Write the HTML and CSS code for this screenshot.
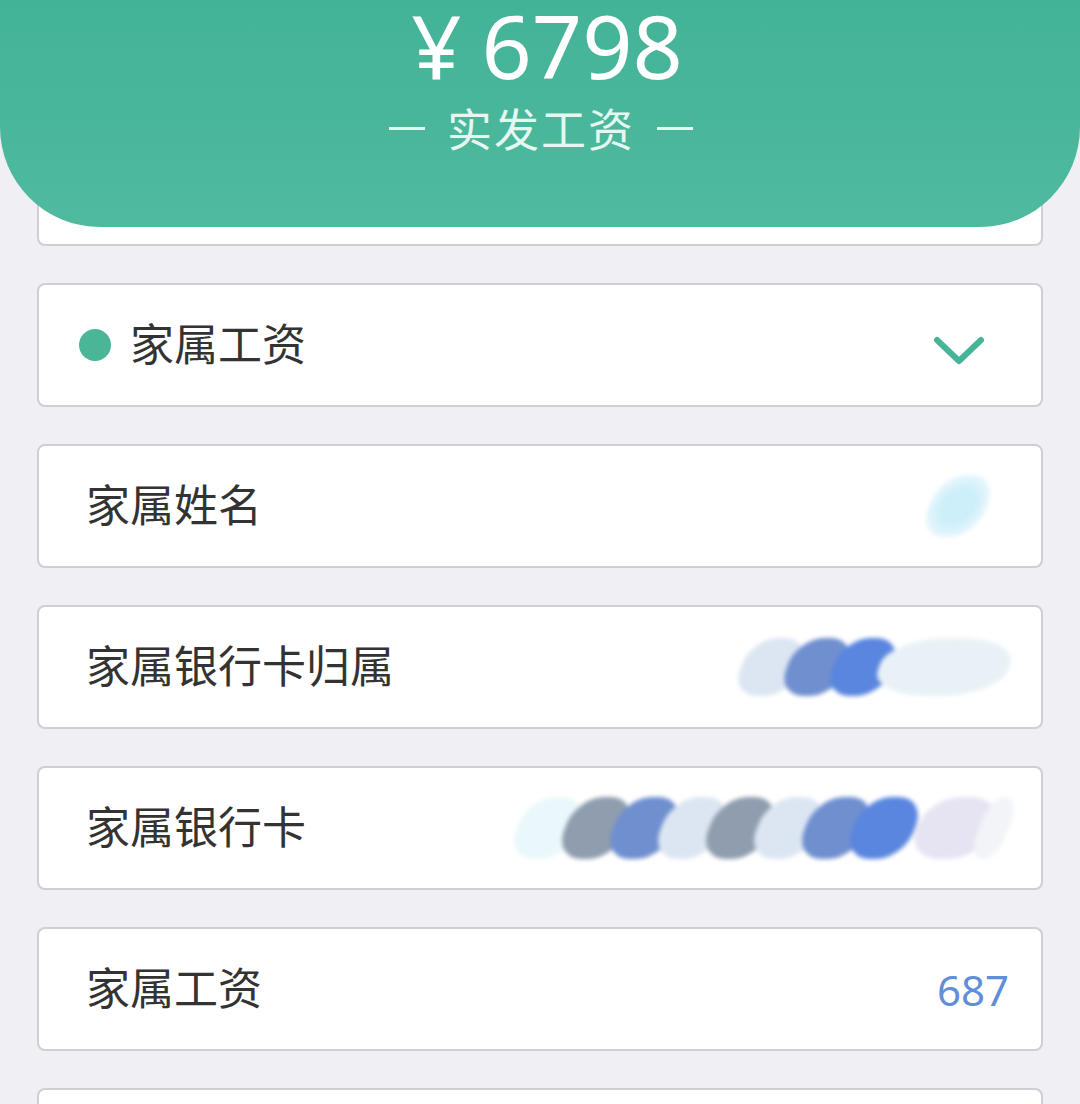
FILE: index.html
```html
<!DOCTYPE html>
<html lang="zh-CN">
<head>
    <meta charset="UTF-8">
    <meta name="viewport" content="width=device-width, initial-scale=1.0">
    <title>实发工资</title>
    <link rel="stylesheet" href="styles.css">
</head>
<body>
    <header class="summary">
        <div class="amount"><span class="currency">¥</span>6798</div>
        <div class="caption"><span class="dash"></span>实发工资<span class="dash"></span></div>
    </header>

    <main class="rows">
        <div class="row"></div>

        <div class="row row-group">
            <span class="dot"></span>
            <span class="label">家属工资</span>
            <svg class="chevron" width="60" height="40" viewBox="0 0 60 40">
                <polyline points="8,10 30,31 52,10" fill="none" stroke="#47B497" stroke-width="6" stroke-linecap="round" stroke-linejoin="round"/>
            </svg>
        </div>

        <div class="row">
            <span class="label">家属姓名</span>
            <span class="smudge smudge-name">
                <i class="blob b-cyan"></i>
            </span>
        </div>

        <div class="row">
            <span class="label">家属银行卡归属</span>
            <span class="smudge smudge-bank">
                <i class="blob b-pale"></i>
                <i class="blob b-blue"></i>
                <i class="blob b-bright"></i>
                <i class="blob b-pale wide"></i>
            </span>
        </div>

        <div class="row">
            <span class="label">家属银行卡</span>
            <span class="smudge smudge-card">
                <i class="blob b-mist"></i>
                <i class="blob b-grey"></i>
                <i class="blob b-blue"></i>
                <i class="blob b-pale"></i>
                <i class="blob b-grey"></i>
                <i class="blob b-pale"></i>
                <i class="blob b-blue"></i>
                <i class="blob b-bright"></i>
                <i class="blob b-gap"></i>
                <i class="blob b-lilac"></i>
                <i class="blob b-mist small"></i>
            </span>
        </div>

        <div class="row">
            <span class="label">家属工资</span>
            <span class="value">687</span>
        </div>

        <div class="row"></div>
    </main>
</body>
</html>
```

FILE: styles.css
```css
body {
    margin: 0;
    background-color: #EFEFF4;
    font-family: "Noto Sans CJK SC", "Noto Sans", sans-serif;
    color: #333333;
    overflow: hidden;
}
.summary {
    position: relative;
    z-index: 2;
    height: 227px;
    box-sizing: border-box;
    padding-top: 0;
    background: linear-gradient(180deg, #43B398 0%, #4AB79B 60%, #50BA9E 100%);
    border-radius: 0 0 100px 100px;
    color: #FFFFFF;
    text-align: center;
}
.amount {
    font-family: "Noto Sans", sans-serif;
    font-size: 88px;
    line-height: 90px;
    padding-left: 14px;
}
.currency {
    margin-right: 20px;
}
.caption {
    display: flex;
    justify-content: center;
    align-items: center;
    gap: 22px;
    font-size: 45px;
    line-height: 56px;
    margin-top: 10px;
    color: #E4F7F0;
    letter-spacing: 2px;
    padding-left: 2px;
}
.dash {
    width: 36px;
    height: 3px;
    background-color: #E4F7F0;
}
.rows {
    display: flex;
    flex-direction: column;
    gap: 37px;
    margin: -105px 37px 0;
}
.row {
    height: 124px;
    box-sizing: border-box;
    background-color: #FFFFFF;
    border: 2px solid #CFCFD3;
    border-radius: 8px;
    display: flex;
    align-items: center;
    padding: 0 32px 0 47px;
    flex-shrink: 0;
}
.row-group {
    padding-left: 40px;
}
.dot {
    width: 32px;
    height: 32px;
    border-radius: 50%;
    background-color: #4BB598;
    margin-right: 19px;
}
.label {
    font-size: 44px;
    line-height: 1;
    color: #333333;
    margin-top: -6px;
}
.chevron {
    margin-left: auto;
    margin-right: 20px;
    margin-top: 10px;
}
.value {
    margin-left: auto;
    font-family: "Noto Sans", sans-serif;
    font-size: 42px;
    color: #5F8FDA;
}
.smudge {
    margin-left: auto;
    display: flex;
    align-items: center;
    filter: blur(2px);
}
.blob {
    display: block;
    height: 60px;
    width: 60px;
    border-radius: 45%;
    margin-left: -14px;
    transform: skewX(-20deg);
}
.smudge-name {
    margin-right: 22px;
}
.smudge-name .b-cyan {
    width: 58px;
    height: 62px;
    background: radial-gradient(ellipse at center, #CDEFFA 40%, #E6F6FC 70%, rgba(255,255,255,0) 100%);
}
.smudge-bank .blob {
    height: 58px;
}
.b-pale {
    background-color: #DCE6F2;
}
.b-pale.wide {
    width: 130px;
    background-color: #E8F2F6;
}
.b-blue {
    background-color: #6F8FCF;
}
.b-bright {
    background-color: #5A86E0;
}
.b-grey {
    background-color: #8F9DAE;
}
.b-mist {
    background-color: #EAF8FB;
}
.b-mist.small {
    width: 30px;
    background-color: #F2F4F8;
}
.b-lilac {
    width: 80px;
    background-color: #E6E4F2;
}
.b-gap {
    width: 30px;
    background-color: transparent;
}
.smudge-card .blob {
    height: 62px;
    width: 62px;
}
.smudge-card .b-gap {
    width: 30px;
}
.smudge-card .b-lilac {
    width: 76px;
}
.smudge-card .b-mist.small {
    width: 30px;
}
```
